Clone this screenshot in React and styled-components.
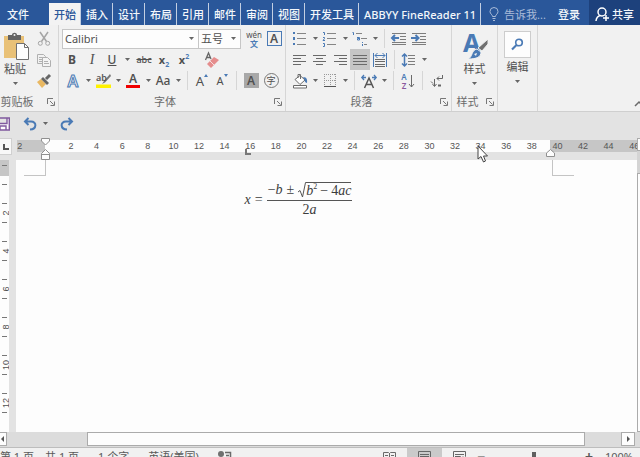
import React from 'react';
import styled, { createGlobalStyle, css } from 'styled-components';

const BLUE = '#2a579a';
const ICON_BLUE = '#4a7ab5';
const ICON_GRAY = '#6a6a6a';

const GlobalStyle = createGlobalStyle`
    * {
        box-sizing: border-box;
    }

    body {
        margin: 0;
        overflow: hidden;
        background-color: #e3e3e3;
        color: #505050;
        font-family: "Noto Sans", "Noto Sans CJK SC", sans-serif;
        font-size: 11px;
    }

    button, input, select {
        margin: 0;
        padding: 0;
        border: none;
        border-radius: 0;
        background: none;
        color: inherit;
        font: inherit;
    }

    svg {
        overflow: visible;
    }
`;

// The status bar runs a little below the window edge
const Window = styled.div`
    display: flex;
    flex-direction: column;
    height: calc(100vh + 9px);
    overflow: hidden;
`;

/* ---------- title bar ---------- */

const TabBar = styled.nav`
    display: flex;
    align-items: stretch;
    height: 25px;
    padding-top: 3px;
    background-color: ${BLUE};
    color: #f4f7fb;
    white-space: nowrap;
`;

const FileTab = styled.button`
    padding: 0 20px 0 7px;
    font-weight: 500;
`;

const Tab = styled.button`
    padding: 0 4px 0 5px;
    border-right: 1px solid #c3cfe2;
    font-weight: 500;

    ${props => props.$active && css`
        background-color: #f3f3f3;
        color: ${BLUE};
    `}
`;

const TellMe = styled.label`
    display: flex;
    flex: 1;
    align-items: center;
    gap: 5px;
    min-width: 0;
    padding-left: 8px;
    color: #a9bbd8;

    input {
        width: 45px;
    }

    input::placeholder {
        color: #a9bbd8;
        opacity: 1;
    }
`;

const SignIn = styled.button`
    padding: 0 9px;
    font-weight: 500;
`;

const ShareButton = styled.button`
    display: flex;
    align-items: center;
    gap: 3px;
    margin-top: -3px;
    padding: 3px 6px 0;
    background-color: #1d417c;
    font-weight: 500;
`;

/* ---------- ribbon ---------- */

// First group is partly scrolled off on the left
const Ribbon = styled.section`
    display: flex;
    height: 87px;
    margin-left: -10px;
    border-bottom: 1px solid #cfcfcf;
    background-color: #f1f1f1;
`;

const Group = styled.div`
    display: flex;
    flex-direction: column;
    width: ${props => props.$width}px;
    padding-top: 3px;
    border-right: 1px solid #d6d6d6;
`;

const GroupBody = styled.div`
    display: flex;
    height: 64px;
    padding-left: ${props => props.$pad || 0}px;
    justify-content: ${props => (props.$center ? 'center' : 'flex-start')};
`;

const GroupFooter = styled.div`
    display: flex;
    flex: 1;
    align-items: center;
    color: #6b6b6b;
`;

const GroupLabel = styled.span`
    flex: 1;
    text-align: center;
    line-height: 19px;
`;

const Launcher = styled.button`
    display: grid;
    place-items: center;
    width: 14px;
    height: 14px;
`;

const Rows = styled.div`
    display: flex;
    flex-direction: column;
`;

const Row = styled.div`
    display: flex;
    align-items: center;
    height: 21px;
    padding-left: ${props => (props.$inset ? 1 : 0)}px;
`;

const Tool = styled.button`
    display: grid;
    place-items: center;
    width: 20px;
    height: 21px;
    background-color: ${props => (props.$pressed ? '#c5c5c5' : 'transparent')};
`;

const CaretButton = styled.button`
    display: grid;
    place-items: center;
    width: 10px;
    height: 21px;
`;

const Cluster = styled.div`
    display: flex;
    margin-left: ${props => props.$gap || 0}px;
`;

const Divider = styled.span`
    width: 1px;
    height: 19px;
    margin: 0 4px;
    background-color: #d6d6d6;
`;

const Glyph = styled.span`
    font-size: ${props => props.$size || 12}px;
    line-height: 14px;
    font-weight: ${props => (props.$bold ? 700 : 500)};
    font-style: ${props => (props.$italic ? 'italic' : 'normal')};
    font-family: ${props => (props.$serif ? '"Liberation Serif", serif' : 'inherit')};
    text-decoration: ${props => props.$line || 'none'};
    white-space: nowrap;

    sub, sup {
        color: ${ICON_BLUE};
        font-size: 7px;
        line-height: 0;
    }
`;

const Swatch = styled.span`
    display: flex;
    justify-content: center;
    width: 14px;
    height: 15px;
    border-bottom: 3px solid ${props => props.$color};
    font-size: 12px;
    font-weight: 600;
    line-height: 12px;
`;

const CharFrame = styled.span`
    width: 15px;
    height: 15px;
    border: 1px solid ${props => props.$border};
    border-radius: ${props => (props.$round ? '50%' : '0')};
    background-color: ${props => props.$fill || 'transparent'};
    font-size: ${props => (props.$round ? 9 : 12)}px;
    font-weight: ${props => (props.$round ? 400 : 600)};
    line-height: 13px;
    text-align: center;
`;

const Phonetic = styled.span`
    display: flex;
    flex-direction: column;
    align-items: center;
    font-size: 8px;
    line-height: 9px;

    b {
        color: ${ICON_BLUE};
    }
`;

const OutlineA = styled.span`
    color: #f1f1f1;
    font-size: 16px;
    font-weight: 600;
    line-height: 16px;
    -webkit-text-stroke: 1px ${ICON_BLUE};
`;

const SizedA = styled.span`
    display: flex;
    font-size: ${props => (props.$small ? 11 : 13)}px;
    line-height: 14px;
`;

const Combo = styled.label`
    display: flex;
    align-items: center;
    width: ${props => props.$width}px;
    height: 20px;
    margin-right: ${props => (props.$joined ? -1 : 3)}px;
    padding: 0 4px 0 2px;
    border: 1px solid #c6c6c6;
    background-color: #fdfdfd;

    select {
        flex: 1;
        min-width: 0;
        appearance: none;
        outline: none;
    }
`;

const BigButton = styled.button`
    display: flex;
    flex-direction: column;
    align-items: center;
    width: 30px;
    height: 63px;
    padding-top: ${props => (props.$boxed ? 1 : 3)}px;
    line-height: 16px;

    > svg:last-child {
        margin-top: 5px;
    }
`;

const BigIcon = styled.span`
    display: grid;
    place-items: center;
    height: 30px;
`;

const SearchBox = styled.span`
    display: grid;
    place-items: center;
    width: 27px;
    height: 27px;
    border: 1px solid #cdcdcd;
    background-color: #fdfdfd;
`;

const CollapseButton = styled.button`
    display: flex;
    align-items: flex-end;
    margin-left: auto;
    padding-bottom: 4px;
`;

/* ---------- quick access ---------- */

const QuickAccess = styled.div`
    display: flex;
    align-items: center;
    gap: 7px;
    height: 26px;
    margin-left: -7px;
    padding-bottom: 3px;
`;

/* ---------- document area ---------- */

const Workspace = styled.main`
    display: grid;
    flex: 1;
    grid-template-columns: minmax(0, 1fr) 3px;
    min-height: 0;
`;

const DocColumn = styled.div`
    display: flex;
    flex-direction: column;
    min-height: 0;
`;

const RulerRow = styled.div`
    display: flex;
    height: 22px;
    position: relative;
`;

const TabKind = styled.button`
    display: grid;
    place-items: center;
    width: 12px;
    height: 17px;
    margin-right: 5px;
    border: 1px solid #d0d0d0;
    border-left: none;
    background-color: #f8f8f8;
`;

const RulerTrack = styled.div`
    flex: 1;
    height: 12px;
    margin-top: 2px;
    overflow: hidden;
    background: linear-gradient(
        to right,
        #c6c6c6 28px,
        #fdfdfd 28px calc(100% - 87px),
        #c6c6c6 calc(100% - 87px)
    );
`;

const RulerNumbers = styled.div`
    display: grid;
    grid-template-columns: repeat(25, minmax(0, 1fr));
    margin: 0 -10px;
    color: #555555;
    font-family: "Liberation Sans", sans-serif;
    font-size: 9px;
    line-height: 12px;
    text-align: center;
`;

// Indent handles and tab stops sit over the ruler
const Marker = styled.svg`
    position: absolute;
    top: ${props => props.$top}px;
    left: ${props => (props.$left !== undefined ? `${props.$left}px` : 'auto')};
    right: ${props => (props.$right !== undefined ? `${props.$right}px` : 'auto')};
`;

const DocRow = styled.div`
    display: flex;
    flex: 1;
    min-height: 0;
`;

const SideRuler = styled.div`
    width: 9px;
    margin-right: 7px;
    overflow: hidden;
    background: linear-gradient(#c6c6c6 16px, #fdfdfd 16px);
`;

const SideScale = styled.div`
    margin-top: -4px;
`;

const SideCell = styled.div`
    display: flex;
    flex-direction: column;
    align-items: center;
    justify-content: center;
    gap: 5px;
    height: 38px;
    font-family: "Liberation Sans", sans-serif;
    font-size: 9px;

    i {
        width: 5px;
        height: 1px;
        background-color: #777777;
    }

    span {
        display: grid;
        place-items: center;
        height: 8px;
        transform: rotate(-90deg);
    }
`;

const Page = styled.article`
    flex: 1;
    background-color: #fdfdfd;
`;

const CropMarks = styled.div`
    display: flex;
    justify-content: space-between;
    padding: 0 63px 0 8px;
`;

const CropMark = styled.span`
    width: 22px;
    height: 16px;
    border: 0 solid #c4c4c4;
    border-bottom-width: 1px;
    border-left-width: ${props => (props.$side === 'right' ? 1 : 0)}px;
    border-right-width: ${props => (props.$side === 'left' ? 1 : 0)}px;
`;

const Equation = styled.div`
    display: flex;
    align-items: center;
    justify-content: center;
    gap: 4px;
    padding: 6px 85px 0 29px;
    color: #3c3c3c;
    font-family: "Liberation Serif", serif;
    font-size: 14px;
    line-height: 16px;

    em {
        font-style: italic;
    }
`;

const Fraction = styled.span`
    display: flex;
    flex-direction: column;
    align-items: center;
`;

const Numerator = styled.span`
    display: flex;
    align-items: flex-end;
    gap: 4px;
    padding: 0 1px 2px;
    border-bottom: 1px solid #555555;
`;

const Denominator = styled.span`
    padding-top: 1px;
`;

const Root = styled.span`
    display: flex;
    align-items: flex-end;
`;

const Radicand = styled.span`
    display: flex;
    gap: 3px;
    height: 16px;
    border-top: 1px solid #555555;
    line-height: 15px;

    sup {
        font-size: 8px;
        line-height: 0;
    }
`;

const VerticalScroll = styled.div`
    display: flex;
    flex-direction: column;
    background-color: #d4d4d4;
`;

const VerticalPart = styled.span`
    flex: ${props => (props.$grow ? '1' : '0 0 13px')};
    margin-top: ${props => (props.$grow ? 22 : 0)}px;
    border: 1px solid #ababab;
    border-right: none;
    background-color: #fdfdfd;
`;

const HorizontalScroll = styled.div`
    display: flex;
    align-items: stretch;
    height: 16px;
    padding: 0 5px 1px 0;
    border-bottom: 1px solid #bdbdbd;
    background-color: #dcdcdc;
`;

const ScrollButton = styled.button`
    display: grid;
    place-items: center;
    width: ${props => (props.$cut ? 7 : 14)}px;
    border: 1px solid #ababab;
    border-left-width: ${props => (props.$cut ? 0 : 1)}px;
    background-color: #fdfdfd;
`;

const ScrollTrack = styled.div`
    display: flex;
    flex: 1;
    padding: 0 36px 0 80px;
`;

const ScrollThumb = styled.span`
    flex: 1;
    border: 1px solid #ababab;
    background-color: #fdfdfd;
`;

/* ---------- status bar ---------- */

const StatusBar = styled.footer`
    display: flex;
    align-items: center;
    height: 18px;
    background-color: #f1f1f1;
    color: #5a5a5a;
    line-height: 18px;
    white-space: nowrap;
`;

const StatusItem = styled.span`
    margin-right: ${props => (props.$wide ? 19 : 11)}px;
`;

const ViewButtons = styled.div`
    display: flex;
    margin-left: auto;
`;

const ViewButton = styled.button`
    display: grid;
    place-items: center;
    width: 35px;
    height: 18px;
    background-color: ${props => (props.$active ? '#cacaca' : 'transparent')};
`;

const ZoomControl = styled.div`
    display: flex;
    align-items: center;
    gap: 5px;
    margin-right: 7px;

    input {
        width: 91px;
        height: 18px;
        appearance: none;
    }

    input::-webkit-slider-runnable-track {
        height: 1px;
        background-color: #8a8a8a;
    }

    input::-webkit-slider-thumb {
        appearance: none;
        width: 4px;
        height: 11px;
        margin-top: -5px;
        background-color: #5f5f5f;
    }
`;

const ZoomStep = styled.button`
    width: 7px;
    font-size: 14px;
    font-weight: 700;
`;

const ZoomValue = styled.output`
    margin-left: 8px;
`;

const Pointer = styled.svg`
    position: absolute;
    top: 7px;
    left: 477px;
`;

/* ---------- icons ---------- */

const Icon = ({ w = 16, h = w, children, ...rest }) => (
    <svg width={w} height={h} viewBox={`0 0 ${w} ${h}`} fill="none" stroke={ICON_GRAY} aria-hidden="true" {...rest}>
        {children}
    </svg>
);

const Caret = () => (
    <Icon w={5} h={3}><path d="M0 0h5L2.5 3z" fill="#666" stroke="none" /></Icon>
);

const LauncherIcon = () => (
    <Icon w={8} stroke="#777"><path d="M.5 6V.5H6M3 3l3.500 3.500M7.500 3.500v4h-4" /></Icon>
);

// lines: list of [x1, x2, y]
const Lines = ({ lines, color = '#6a6a6a' }) => (
    <path d={lines.map(([a, b, y]) => `M${a} ${y}.5H${b}`).join('')} stroke={color} />
);

const BulletsIcon = () => (
    <Icon>
        <path d="M1 1h2v2H1zM1 6h2v3H1zM1 12h2v2H1z" fill={ICON_BLUE} stroke="none" />
        <Lines lines={[[5, 14, 2], [5, 14, 7], [5, 14, 13]]} color="#858585" />
    </Icon>
);

const NumberingIcon = () => (
    <Icon>
        <path d="M1 1.500h1.500V4M1 6.500h1.500v1L1 9.500h2M1 12.500h1.500v3H1" stroke={ICON_BLUE} />
        <Lines lines={[[5, 14, 2], [5, 14, 7], [5, 14, 13]]} color="#858585" />
    </Icon>
);

const MultiLevelIcon = () => (
    <Icon>
        <path d="M.5 1.500h1V4M5 6.500h2.500V9H5.500V7.500h2M10.500 11v1M10.500 13v2" stroke={ICON_BLUE} />
        <Lines lines={[[4, 10, 2], [9, 15, 7], [12, 15, 13]]} color="#858585" />
    </Icon>
);

const IndentIcon = ({ increase }) => (
    <Icon>
        <Lines lines={[[1, 15, 2], [9, 15, 5], [9, 15, 8], [1, 15, 11], [1, 15, 13]]} color="#7d7d7d" />
        <path d={increase ? 'M0 7h7M4.500 4L7.500 7l-3 3' : 'M8 7H1M4 4L1 7l3 3'} stroke={ICON_BLUE} strokeWidth="2" />
    </Icon>
);

const ALIGN = {
    left: [[1, 14, 3], [1, 9, 6], [1, 14, 9], [1, 9, 12]],
    center: [[1, 14, 3], [4, 11, 6], [1, 14, 9], [4, 11, 12]],
    right: [[2, 15, 3], [7, 15, 6], [2, 15, 9], [7, 15, 12]],
    justify: [[1, 15, 3], [1, 15, 6], [1, 15, 9], [1, 15, 12]],
};

const AlignIcon = ({ kind }) => <Icon><Lines lines={ALIGN[kind]} /></Icon>;

const DistributeIcon = () => (
    <Icon>
        <path d="M1.500 1v14M14.500 1v14M3 3.500h10M5.500 1L3 3.500 5.500 6M10.500 1L13 3.500 10.500 6" stroke={ICON_BLUE} />
        <Lines lines={[[3, 13, 7], [3, 13, 9], [3, 13, 12], [3, 13, 14]]} />
    </Icon>
);

const LineSpacingIcon = () => (
    <Icon>
        <path d="M3.500 2v12M1 4.500L3.500 2 6 4.500M1 11.500L3.500 14 6 11.500" stroke={ICON_BLUE} strokeWidth="1.500" />
        <Lines lines={[[7, 14, 3], [7, 14, 6], [7, 14, 9], [7, 14, 12]]} color="#7d7d7d" />
    </Icon>
);

const BucketIcon = () => (
    <Icon>
        <path d="M3 6.500l5-4 5 4.500-5 4.500zM6 5V1.500h2.500V6" fill="#fff" />
        <path d="M11 4c4 0 4.500 3 4 6-2-.5-2.500-2-2.500-3.500z" fill={ICON_BLUE} stroke="none" />
        <path d="M1.500 12.500h13v2.500h-13z" fill="#fff" />
    </Icon>
);

const BordersIcon = () => (
    <Icon>
        <path d="M2.500 1v12M8.500 1v12M13.500 1v12M2 1.500h12M2 7.500h12" stroke="#999" strokeDasharray="1 1" />
        <path d="M2 13.500h12" stroke="#555" />
    </Icon>
);

const CharScaleIcon = () => (
    <Icon>
        <path d="M3.500 15L8 5l4.500 10M5.500 11.500h5" strokeWidth="1.500" stroke="#555" />
        <path d="M1 4.500h4M3 2L.8 4.500 3 7M15 4.500h-4M13 2l2.200 2.500L13 7" stroke={ICON_BLUE} strokeWidth="1.300" />
    </Icon>
);

const SortLetters = styled.span`
    display: flex;
    flex-direction: column;
    color: ${ICON_BLUE};
    font-size: 8px;
    font-weight: 600;
    line-height: 9px;

    b {
        color: #8a5a9e;
        font-weight: 600;
    }
`;

const SortButtonBody = styled.span`
    display: flex;
    align-items: center;
    gap: 1px;
`;

const MarksIcon = () => (
    <Icon w={14}>
        <path d="M12.500 1v3.500H7M9 2.500L7 4.500l2 2M4.500 5v7M2.500 10l2 2.500 2-2.500M1 7.500l2 2" stroke="#666" />
        <path d="M8 11.500h3" stroke="#666" strokeWidth="2" />
    </Icon>
);

const PasteIcon = () => (
    <Icon w={28}>
        <path d="M3 4h20v22H3z" fill="#e9c177" stroke="none" />
        <path d="M7 3h4c0-3 5-3 5 0h4v5H7z" fill="#636363" stroke="none" />
        <circle cx="13.500" cy="3" r="1" fill="#f1f1f1" stroke="none" />
        <path d="M15.500 11.500h8l4 4v12h-12z" fill="#fdfdfd" stroke="#707070" />
        <path d="M23.500 11.500v4h4" stroke="#707070" />
    </Icon>
);

const CutIcon = () => (
    <Icon w={14} stroke="#a5a5a5">
        <path d="M3 0l6.500 9.500M11 0L4.500 9.500" strokeWidth="1.500" />
        <circle cx="3.300" cy="11.300" r="2" />
        <circle cx="10.700" cy="11.300" r="2" />
    </Icon>
);

const CopyIcon = () => (
    <Icon w={14} stroke="#b0b0b0">
        <path d="M8.500 10.500h-8v-9h6l2 2zM2 4.500h4M2 6.500h4M2 8.500h3" />
        <path d="M5.500 4.500h5l3 3v6h-8z" fill="#f4f4f4" />
        <path d="M7 8.500h4M7 10.500h5" />
    </Icon>
);

const BrushIcon = () => (
    <Icon w={14}>
        <path d="M0 8l4-3 5 5-4 4z" fill="#e9b862" stroke="none" />
        <path d="M4 5l2-2 6 6-2 2z" fill="#666" stroke="none" />
        <path d="M9 5l4-4" stroke="#666" strokeWidth="3" />
    </Icon>
);

const EraserIcon = () => (
    <Icon>
        <path d="M1.500 8L4.500 1l2.500 6M2.500 5.500h4" stroke="#666" strokeWidth="1.300" />
        <path d="M3 12l7-7 5 3-8 8z" fill="#e58d8d" stroke="none" />
        <path d="M6 9l4 4" stroke="#f8dede" />
    </Icon>
);

const HighlightIcon = () => (
    <Icon w={15}>
        <path d="M14 1L8 8l-2 3 3-1.500L15 3z" fill="#777" stroke="none" />
        <path d="M0 11.500h15v3.500H0z" fill="#fff200" stroke="none" />
        <text x="0" y="8" fontSize="9" fontWeight="600" fill="#555" stroke="none">ab</text>
    </Icon>
);

const StylesIcon = () => (
    <Icon w={28}>
        <text x="2" y="20" fontSize="25" fontWeight="700" fill={ICON_BLUE} stroke="none">A</text>
        <path d="M27 7v5l-6 7-4-3z" fill="#707070" stroke="#f1f1f1" />
        <path d="M16 17l4 3c0 5-4 7-13 7 5-2 3-9 9-10z" fill={ICON_BLUE} stroke="#f1f1f1" />
        <path d="M13 22l3-1-1 3z" fill="#f1f1f1" stroke="none" />
    </Icon>
);

const SearchIcon = () => (
    <Icon w={13} stroke={ICON_BLUE}>
        <circle cx="8" cy="4.500" r="3.300" strokeWidth="1.600" />
        <path d="M5.500 7L1 11.500" strokeWidth="2.200" />
    </Icon>
);

const BulbIcon = () => (
    <Icon w={10} h={14} stroke="#a9bbd8">
        <path d="M3.500 9.500C3.500 7.500 1 7 1 4.500a4 4 0 018 0c0 2.500-2.500 3-2.500 5zM3.500 11.500h3M4 13.500h2" />
    </Icon>
);

const PersonIcon = () => (
    <Icon w={14} stroke="#ffffff">
        <circle cx="7" cy="5" r="4" strokeWidth="1.500" />
        <path d="M1 14c.3-3 2-5 4.500-5.500M11 8v6M8 11h6" strokeWidth="1.500" />
    </Icon>
);

const SaveIcon = () => (
    <Icon w={14} stroke="#80599f">
        <path d="M.7 1h12.600v12H.7zM3 1v5.500h8V1M4 13V9h6v4" fill="#fdfdfd" strokeWidth="1.400" />
    </Icon>
);

const UndoIcon = ({ flip }) => (
    <Icon w={14} stroke={ICON_BLUE} transform={flip ? 'scale(-1 1)' : undefined}>
        <path d="M2 4.500h6c6 0 6 7.500-1 8M5.500 1L2 4.500 5.500 8" strokeWidth="2" />
    </Icon>
);

const ProofIcon = () => (
    <Icon w={14} h={12}>
        <circle cx="3" cy="3" r="3" fill="#707070" stroke="none" />
        <path d="M7 1.500h5.500V8M8 4.500h3M2 10.500h7" strokeWidth="1.500" />
    </Icon>
);

const ReadIcon = () => (
    <Icon w={13} h={12}>
        <path d="M.5 1.500h5l1 1 1-1h5v9h-12zM6.500 2v9M2 4.500h3M2 6.500h3M8 4.500h3M8 6.500h3" />
    </Icon>
);

const PrintIcon = ({ web }) => (
    <Icon w={13} h={12}>
        <path d="M.5.5h12v11H.5zM2 3.500h9M2 5.500h9M2 7.500h9" stroke="#666" />
        {web && <circle cx="10" cy="8" r="3" fill="#777" stroke="#f1f1f1" />}
    </Icon>
);

/* ---------- parts ---------- */

const MENU_TABS = ['开始', '插入', '设计', '布局', '引用', '邮件', '审阅', '视图', '开发工具', 'ABBYY FineReader 11'];

const Split = ({ label, children }) => (
    <>
        <Tool aria-label={label}>{children}</Tool>
        <CaretButton aria-label={`${label} 选项`}><Caret /></CaretButton>
    </>
);

const Footer = ({ label }) => (
    <GroupFooter>
        <GroupLabel>{label}</GroupLabel>
        <Launcher aria-label={`${label} 对话框`}><LauncherIcon /></Launcher>
    </GroupFooter>
);

const ClipboardGroup = () => (
    <Group $width={69}>
        <GroupBody $pad={10}>
            <BigButton>
                <BigIcon><PasteIcon /></BigIcon>
                粘贴
                <Caret />
            </BigButton>
            <Cluster $gap={4}>
                <Rows>
                    <Tool aria-label="剪切"><CutIcon /></Tool>
                    <Tool aria-label="复制"><CopyIcon /></Tool>
                    <Tool aria-label="格式刷"><BrushIcon /></Tool>
                </Rows>
            </Cluster>
        </GroupBody>
        <Footer label="剪贴板" />
    </Group>
);

const FontGroup = () => (
    <Group $width={227}>
        <GroupBody $pad={3}>
            <Rows>
                <Row>
                    <Combo $width={137} $joined>
                        <select aria-label="字体"><option>Calibri</option></select>
                        <Caret />
                    </Combo>
                    <Combo $width={43}>
                        <select aria-label="字号"><option>五号</option></select>
                        <Caret />
                    </Combo>
                    <Tool aria-label="拼音指南"><Phonetic>wén<b>文</b></Phonetic></Tool>
                    <Tool aria-label="字符边框"><CharFrame $border={ICON_BLUE}>A</CharFrame></Tool>
                </Row>
                <Row>
                    <Tool><Glyph $bold>B</Glyph></Tool>
                    <Tool><Glyph $italic $serif $size={14}>I</Glyph></Tool>
                    <Tool><Glyph $line="underline">U</Glyph></Tool>
                    <CaretButton aria-label="下划线选项"><Caret /></CaretButton>
                    <Cluster $gap={2}>
                        <Tool><Glyph $size={9} $line="line-through">abc</Glyph></Tool>
                        <Tool><Glyph $size={11} $bold>x<sub>2</sub></Glyph></Tool>
                        <Tool><Glyph $size={11} $bold>x<sup>2</sup></Glyph></Tool>
                    </Cluster>
                    <Cluster $gap={8}>
                        <Tool aria-label="清除格式"><EraserIcon /></Tool>
                    </Cluster>
                </Row>
                <Row $inset>
                    <Split label="文本效果"><OutlineA>A</OutlineA></Split>
                    <Split label="突出显示"><HighlightIcon /></Split>
                    <Split label="字体颜色"><Swatch $color="#f00000">A</Swatch></Split>
                    <Split label="更改大小写"><Glyph>Aa</Glyph></Split>
                    <Divider />
                    <Tool aria-label="增大字号">
                        <SizedA>A<Icon w={4} h={3}><path d="M0 3h4L2 0z" fill={ICON_BLUE} stroke="none" /></Icon></SizedA>
                    </Tool>
                    <Tool aria-label="减小字号">
                        <SizedA $small>A<Icon w={4} h={3}><path d="M0 0h4L2 3z" fill={ICON_BLUE} stroke="none" /></Icon></SizedA>
                    </Tool>
                    <Divider />
                    <Tool aria-label="字符底纹"><CharFrame $border="#a8a8a8" $fill="#a8a8a8">A</CharFrame></Tool>
                    <Tool aria-label="带圈字符"><CharFrame $border="#777777" $round>字</CharFrame></Tool>
                </Row>
            </Rows>
        </GroupBody>
        <Footer label="字体" />
    </Group>
);

const ParagraphGroup = () => (
    <Group $width={166}>
        <GroupBody $pad={4}>
            <Rows>
                <Row>
                    <Split label="项目符号"><BulletsIcon /></Split>
                    <Split label="编号"><NumberingIcon /></Split>
                    <Split label="多级列表"><MultiLevelIcon /></Split>
                    <Divider />
                    <Tool aria-label="减少缩进"><IndentIcon /></Tool>
                    <Tool aria-label="增加缩进"><IndentIcon increase /></Tool>
                </Row>
                <Row>
                    <Tool aria-label="左对齐"><AlignIcon kind="left" /></Tool>
                    <Tool aria-label="居中"><AlignIcon kind="center" /></Tool>
                    <Tool aria-label="右对齐"><AlignIcon kind="right" /></Tool>
                    <Tool aria-label="两端对齐" $pressed><AlignIcon kind="justify" /></Tool>
                    <Tool aria-label="分散对齐"><DistributeIcon /></Tool>
                    <Divider />
                    <Split label="行距"><LineSpacingIcon /></Split>
                </Row>
                <Row>
                    <Split label="底纹"><BucketIcon /></Split>
                    <Split label="边框"><BordersIcon /></Split>
                    <Divider />
                    <Split label="中文版式"><CharScaleIcon /></Split>
                    <Divider />
                    <Tool aria-label="排序">
                        <SortButtonBody>
                            <SortLetters>A<b>Z</b></SortLetters>
                            <Icon w={7} h={14}><path d="M3.500 1v12M1 10l2.500 3L6 10" /></Icon>
                        </SortButtonBody>
                    </Tool>
                    <Divider />
                    <Tool aria-label="显示编辑标记"><MarksIcon /></Tool>
                </Row>
            </Rows>
        </GroupBody>
        <Footer label="段落" />
    </Group>
);

const NUMBERS = [2, null, ...Array.from({ length: 23 }, (_, i) => (i + 1) * 2)];
const SIDE_NUMBERS = [null, 2, 4, 6, 8, 10, 12];

const Ruler = () => (
    <RulerRow>
        <TabKind aria-label="制表符">
            <Icon w={6}><path d="M1 0v5h5" stroke="#555" strokeWidth="2" /></Icon>
        </TabKind>
        <RulerTrack>
            <RulerNumbers>
                {NUMBERS.map((n, i) => <span key={i}>{n}</span>)}
            </RulerNumbers>
        </RulerTrack>
        <Marker $top={0} $left={41} width="9" height="22" fill="#fdfdfd" stroke="#909090">
            <path d="M.5.500h8v2.500l-4 4-4-4zM.5 21.500v-6l4-4 4 4v6zM.5 16.500h8" />
        </Marker>
        <Marker $top={11} $right={82} width="9" height="8" fill="#fdfdfd" stroke="#909090">
            <path d="M.5 7.500V4l4-3.500 4 3.500v3.500z" />
        </Marker>
        <Marker $top={11} $left={245} width="6" height="6" fill="none" stroke="#777" strokeWidth="2">
            <path d="M1 0v5h5" />
        </Marker>
        <Pointer width="12" height="18" fill="#fdfdfd" stroke="#444">
            <path d="M1 1v13l3-2.500 2.500 5.500 2-1L6.500 11H10.500z" />
        </Pointer>
    </RulerRow>
);

const QuadraticFormula = () => (
    <Equation>
        <em>x</em>
        <span>=</span>
        <Fraction>
            <Numerator>
                <span>−<em>b</em></span>
                <span>±</span>
                <Root>
                    <Icon w={8} h={16} stroke="#555"><path d="M0 10l2-1.500L4.500 15 7.500.5H8" /></Icon>
                    <Radicand>
                        <span><em>b</em><sup>2</sup></span>
                        <span>−</span>
                        <span>4<em>ac</em></span>
                    </Radicand>
                </Root>
            </Numerator>
            <Denominator>2<em>a</em></Denominator>
        </Fraction>
    </Equation>
);

const App = () => {
    return (
        <Window>
            <GlobalStyle />
            <TabBar>
                <FileTab>文件</FileTab>
                {MENU_TABS.map((name, i) => <Tab key={name} $active={i === 0}>{name}</Tab>)}
                <TellMe>
                    <BulbIcon />
                    <input aria-label="告诉我" placeholder="告诉我..." />
                </TellMe>
                <SignIn>登录</SignIn>
                <ShareButton><PersonIcon />共享</ShareButton>
            </TabBar>

            <Ribbon>
                <ClipboardGroup />
                <FontGroup />
                <ParagraphGroup />
                <Group $width={46}>
                    <GroupBody $center>
                        <BigButton>
                            <BigIcon><StylesIcon /></BigIcon>
                            样式
                            <Caret />
                        </BigButton>
                    </GroupBody>
                    <Footer label="样式" />
                </Group>
                <Group $width={40}>
                    <GroupBody $center>
                        <BigButton $boxed>
                            <BigIcon><SearchBox><SearchIcon /></SearchBox></BigIcon>
                            编辑
                            <Caret />
                        </BigButton>
                    </GroupBody>
                </Group>
                <CollapseButton aria-label="折叠功能区">
                    <Icon w={6}><path d="M1 5l4-4 4 4" strokeWidth="1.500" /></Icon>
                </CollapseButton>
            </Ribbon>

            <QuickAccess>
                <Tool aria-label="保存"><SaveIcon /></Tool>
                <Cluster><Split label="撤消"><UndoIcon /></Split></Cluster>
                <Tool aria-label="恢复"><UndoIcon flip /></Tool>
            </QuickAccess>

            <Workspace>
                <DocColumn>
                    <Ruler />
                    <DocRow>
                        <SideRuler>
                            <SideScale>
                                {SIDE_NUMBERS.map((n, i) => (
                                    <SideCell key={i}><i /><span>{n}</span><i /></SideCell>
                                ))}
                            </SideScale>
                        </SideRuler>
                        <Page>
                            <CropMarks>
                                <CropMark $side="left" />
                                <CropMark $side="right" />
                            </CropMarks>
                            <QuadraticFormula />
                        </Page>
                    </DocRow>
                </DocColumn>
                <VerticalScroll>
                    <VerticalPart />
                    <VerticalPart $grow />
                </VerticalScroll>
            </Workspace>

            <HorizontalScroll>
                <ScrollButton $cut aria-label="向左滚动">
                    <Icon w={4} h={6}><path d="M3 0v6L0 3z" fill="#555" stroke="none" /></Icon>
                </ScrollButton>
                <ScrollTrack><ScrollThumb /></ScrollTrack>
                <ScrollButton aria-label="向右滚动">
                    <Icon w={4} h={6}><path d="M1 0v6l3-3z" fill="#555" stroke="none" /></Icon>
                </ScrollButton>
            </HorizontalScroll>

            <StatusBar>
                <StatusItem>第 1 页</StatusItem>
                <StatusItem $wide>共 1 页</StatusItem>
                <StatusItem $wide>1 个字</StatusItem>
                <StatusItem $wide>英语(美国)</StatusItem>
                <ProofIcon />
                <ViewButtons>
                    <ViewButton aria-label="阅读视图"><ReadIcon /></ViewButton>
                    <ViewButton aria-label="页面视图" $active><PrintIcon /></ViewButton>
                    <ViewButton aria-label="Web 版式"><PrintIcon web /></ViewButton>
                </ViewButtons>
                <ZoomControl>
                    <ZoomStep>−</ZoomStep>
                    <input type="range" aria-label="缩放" min="0" max="200" defaultValue="100" />
                    <ZoomStep>+</ZoomStep>
                    <ZoomValue>100%</ZoomValue>
                </ZoomControl>
            </StatusBar>
        </Window>
    );
};

export default App;
